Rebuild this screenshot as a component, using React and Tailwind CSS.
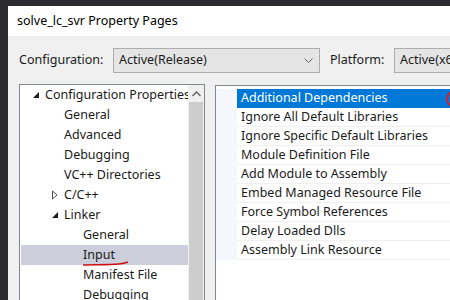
export default function App() {
    const tree = [
        { label: "Configuration Properties", level: 0, arrow: "open" },
        { label: "General", level: 1 },
        { label: "Advanced", level: 1 },
        { label: "Debugging", level: 1 },
        { label: "VC++ Directories", level: 1 },
        { label: "C/C++", level: 1, arrow: "closed" },
        { label: "Linker", level: 1, arrow: "open" },
        { label: "General", level: 2 },
        { label: "Input", level: 2, selected: true },
        { label: "Manifest File", level: 2 },
        { label: "Debugging", level: 2 },
    ];
    const props = [
        "Additional Dependencies",
        "Ignore All Default Libraries",
        "Ignore Specific Default Libraries",
        "Module Definition File",
        "Add Module to Assembly",
        "Embed Managed Resource File",
        "Force Symbol References",
        "Delay Loaded Dlls",
        "Assembly Link Resource",
    ];

    return (
        <div className="w-[450px] h-[300px] overflow-hidden bg-[#2b2b30] pt-[6px] pl-[8px] font-['Noto_Sans','Liberation_Sans',sans-serif] text-[12.5px] text-[#1a1a1a]">
            <div className="h-full bg-[#f0f0f0] flex flex-col">
                <div className="h-[30px] shrink-0 bg-white flex items-center pl-[9px] text-[12.5px] text-black">
                    solve_lc_svr Property Pages
                </div>

                <div className="mt-[12px] h-[25px] shrink-0 flex items-center pl-[11px]">
                    <span className="w-[94px]">Configuration:</span>
                    <div className="w-[207px] h-[25px] bg-[#e5e5e5] border border-[#adadad] flex items-center pl-[5px] pr-[6px]">
                        <span className="flex-1">Active(Release)</span>
                        <svg width="9" height="6" viewBox="0 0 9 6">
                            <path d="M0.5 0.5 L4.5 4.5 L8.5 0.5" fill="none" stroke="#606060" strokeWidth="1" />
                        </svg>
                    </div>
                    <span className="ml-[10px] w-[64px]">Platform:</span>
                    <div className="flex-1 min-w-0 h-[25px] bg-[#e5e5e5] border border-[#adadad] border-r-0 flex items-center pl-[5px] whitespace-nowrap overflow-hidden">
                        Active(x64)
                    </div>
                </div>

                <div className="mt-[11px] flex-1 flex pl-[11px] min-h-0">
                    <div className="w-[186px] shrink-0 border border-[#828790] border-b-0 bg-white flex min-h-0">
                        <div className="flex-1 min-w-0 overflow-hidden flex flex-col pl-[1px]">
                            {tree.map((t, i) => (
                                <div
                                    key={i}
                                    className={
                                        "h-[20px] shrink-0 flex items-center whitespace-nowrap " +
                                        (t.selected ? "bg-[#cccedb]" : "")
                                    }
                                >
                                    <div
                                        className={
                                            "shrink-0 flex items-center justify-center " +
                                            (t.level === 0 ? "w-[24px] pl-[6px]" : t.level === 1 ? "w-[43px] pl-[25px]" : "w-[62px]")
                                        }
                                    >
                                        {t.arrow === "open" && (
                                            <svg width="8" height="8" viewBox="0 0 8 8">
                                                <path d="M7 1 L7 7 L1 7 Z" fill="#1e1e1e" />
                                            </svg>
                                        )}
                                        {t.arrow === "closed" && (
                                            <svg width="8" height="10" viewBox="0 0 8 10">
                                                <path d="M1.5 1 L6 5 L1.5 9 Z" fill="none" stroke="#505050" strokeWidth="1" />
                                            </svg>
                                        )}
                                    </div>
                                    <span className="relative">
                                        {t.label}
                                        {t.selected && (
                                            <svg className="absolute left-0 top-[15px]" width="46" height="6" viewBox="0 0 46 6">
                                                <path d="M0 4 C10 3.5 25 4 36 3 C40 2.6 43 1.5 45 1" fill="none" stroke="#d01010" strokeWidth="1.6" />
                                            </svg>
                                        )}
                                    </span>
                                </div>
                            ))}
                        </div>
                        <div className="w-[16px] shrink-0 flex flex-col bg-[#f0f0f0]">
                            <div className="h-[17px] flex items-center justify-center">
                                <svg width="9" height="6" viewBox="0 0 9 6">
                                    <path d="M0.5 5 L4.5 1 L8.5 5" fill="none" stroke="#606060" strokeWidth="1.3" />
                                </svg>
                            </div>
                            <div className="flex-1 mx-[1px] bg-[#cdcdcd]" />
                        </div>
                    </div>

                    <div className="ml-[10px] flex-1 min-w-0 border-l border-t border-[#828790] bg-white mt-[1px] flex flex-col">
                        <div className="flex flex-col pt-[3px]">
                            {props.map((p, i) => (
                                <div key={i} className="h-[19px] flex">
                                    <div className="w-[21px] shrink-0 bg-[#f5f7fc]" />
                                    <div
                                        className={
                                            "flex-1 flex items-center pl-[4px] whitespace-nowrap relative " +
                                            (i === 0 ? "bg-[#0078d7] text-white" : "border-b border-[#f0f0f0]")
                                        }
                                    >
                                        {p}
                                        {i === 0 && (
                                            <div className="absolute right-[-14px] top-[1px] w-[18px] h-[18px] rounded-full border-2 border-[#d81e2a]" />
                                        )}
                                    </div>
                                </div>
                            ))}
                        </div>
                    </div>
                </div>
            </div>
        </div>
    );
}
